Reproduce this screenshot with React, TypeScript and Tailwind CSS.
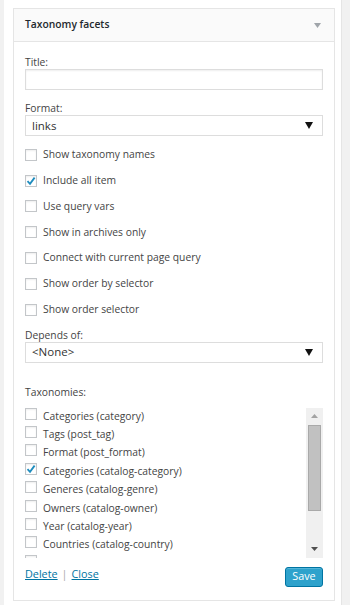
import { useState } from "react";

const options = [
  { label: "Show taxonomy names", checked: false },
  { label: "Include all item", checked: true },
  { label: "Use query vars", checked: false },
  { label: "Show in archives only", checked: false },
  { label: "Connect with current page query", checked: false },
  { label: "Show order by selector", checked: false },
  { label: "Show order selector", checked: false },
];

const taxonomies = [
  { label: "Categories (category)", checked: false },
  { label: "Tags (post_tag)", checked: false },
  { label: "Format (post_format)", checked: false },
  { label: "Categories (catalog-category)", checked: true },
  { label: "Generes (catalog-genre)", checked: false },
  { label: "Owners (catalog-owner)", checked: false },
  { label: "Year (catalog-year)", checked: false },
  { label: "Countries (catalog-country)", checked: false },
];

const Check = ({ checked }: { checked: boolean }) => (
  <span className="w-[12px] h-[12px] shrink-0 border border-[#c3c6c9] bg-white shadow-[inset_0_1px_2px_rgba(0,0,0,0.07)] flex items-center justify-center">
    {checked && (
      <svg width="10" height="10" viewBox="0 0 10 10">
        <path d="M1.5 5.2 L4 7.8 L8.6 1.6" fill="none" stroke="#1e8cbe" strokeWidth="1.8" />
      </svg>
    )}
  </span>
);

const SelectBox = ({ value }: { value: string }) => (
  <div className="h-[21px] border border-[#dddddd] bg-white flex items-center justify-between pl-[6px] pr-[9px] text-[11.5px] text-[#333]">
    <span>{value}</span>
    <svg width="8" height="7" viewBox="0 0 8 7">
      <path d="M0 0 H8 L4 7 Z" fill="#111" />
    </svg>
  </div>
);

const App = () => {
  const [opts] = useState(options);

  return (
    <div
      className="w-[350px] h-[605px] bg-[#f1f1f1] overflow-hidden"
      style={{ fontFamily: '"Open Sans", "Liberation Sans", sans-serif' }}
    >
      <div className="ml-[4px] w-[338px] h-full bg-white border-r border-[#e5e5e5] pl-[9px] pt-[8px]">
        <div className="w-[322px] border border-[#e5e5e5] bg-white">
          <div className="h-[33px] bg-[#fafafa] border-b border-[#e5e5e5] flex items-center justify-between pl-[11px] pr-[13px]">
            <span className="text-[10.3px] font-semibold text-[#23282d]">Taxonomy facets</span>
            <svg width="7" height="5" viewBox="0 0 7 5">
              <path d="M0 0 H7 L3.5 5 Z" fill="#a0a5aa" />
            </svg>
          </div>

          <div className="px-[11px] pt-[13px] pb-[13px] text-[10.3px] text-[#444]">
            <div className="leading-[14px]">Title:</div>
            <div className="h-[21px] border border-[#dddddd] bg-white shadow-[inset_0_1px_2px_rgba(0,0,0,0.07)]" />

            <div className="leading-[14px] mt-[11px]">Format:</div>
            <SelectBox value="links" />

            <div className="mt-[6px] flex flex-col">
              {opts.map((o) => (
                <div key={o.label} className="h-[25.8px] flex items-center gap-[6px]">
                  <Check checked={o.checked} />
                  <span>{o.label}</span>
                </div>
              ))}
            </div>

            <div className="leading-[14px] mt-[5px]">Depends of:</div>
            <SelectBox value="<None>" />

            <div className="leading-[14px] mt-[22px]">Taxonomies:</div>
            <div className="mt-[9px] h-[150px] flex overflow-hidden">
              <div className="flex-1 overflow-hidden">
                {taxonomies.map((t) => (
                  <div key={t.label} className="h-[18.4px] flex items-start gap-[6px]">
                    <Check checked={t.checked} />
                    <span className="leading-[18px] mt-[-1px]">{t.label}</span>
                  </div>
                ))}
                <div className="h-[18.4px] flex items-start">
                  <Check checked={false} />
                </div>
              </div>
              <div className="w-[17px] bg-[#f0f0f0] flex flex-col items-center">
                <div className="h-[17px] flex items-center justify-center">
                  <svg width="7" height="4" viewBox="0 0 7 4">
                    <path d="M0 4 H7 L3.5 0 Z" fill="#a3a3a3" />
                  </svg>
                </div>
                <div className="w-[13px] h-[86px] bg-[#c1c1c1] border border-[#a9a9a9]" />
                <div className="flex-1" />
                <div className="h-[17px] flex items-center justify-center">
                  <svg width="7" height="4" viewBox="0 0 7 4">
                    <path d="M0 0 H7 L3.5 4 Z" fill="#505050" />
                  </svg>
                </div>
              </div>
            </div>

            <div className="mt-[9px] flex items-start justify-between">
              <div className="flex items-center gap-[4px] text-[10.8px] leading-[14px]">
                <a href="#" className="text-[#0074a2] underline">Delete</a>
                <span className="text-[#aaa]">|</span>
                <a href="#" className="text-[#0074a2] underline">Close</a>
              </div>
              <button className="w-[38px] h-[20px] bg-[#2ea2cc] border border-[#0074a2] rounded-[3px] text-white text-[10.8px] shadow-[inset_0_1px_0_rgba(120,200,230,0.5)]">
                Save
              </button>
            </div>
          </div>
        </div>
      </div>
    </div>
  );
};

export default App;
